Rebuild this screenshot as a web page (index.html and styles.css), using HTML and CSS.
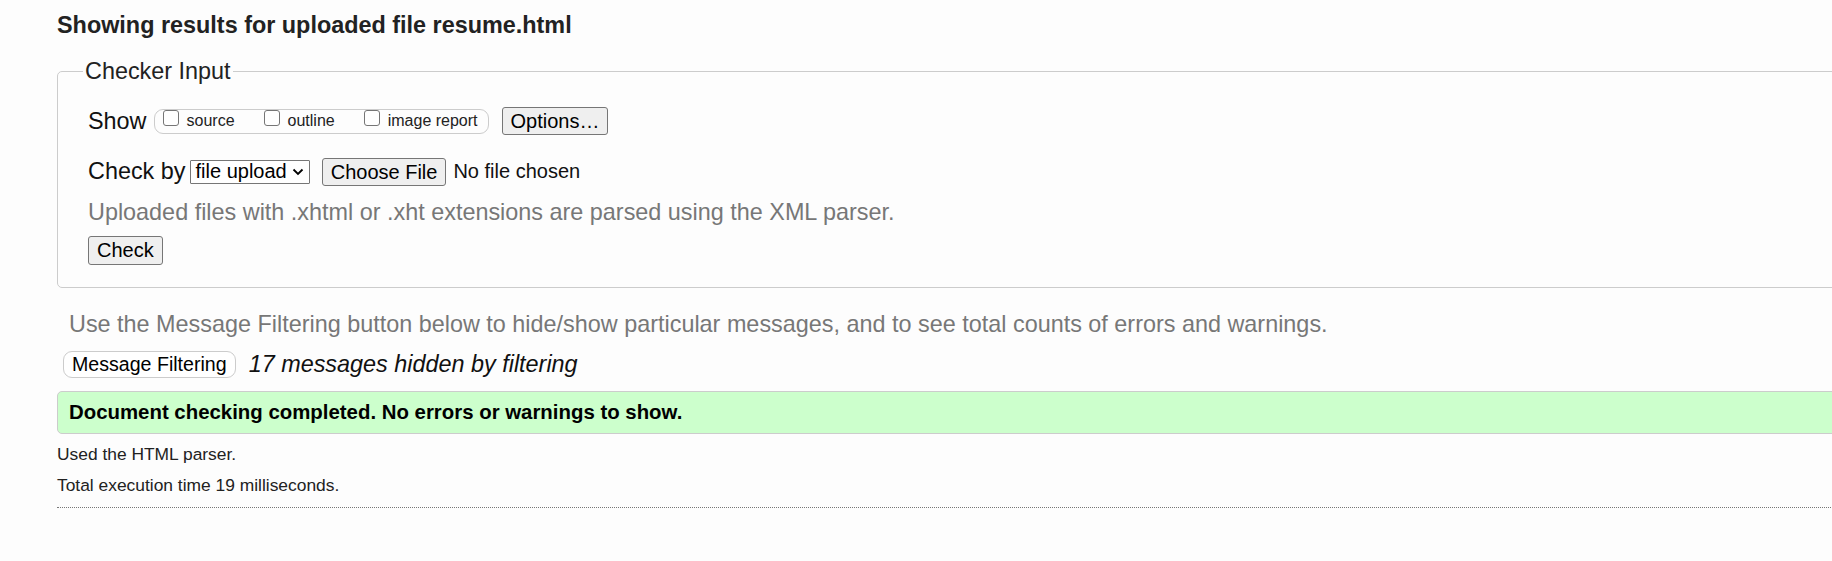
FILE: index.html
```html
<!DOCTYPE html>
<html lang="en">
<head>
<meta charset="utf-8">
<title>Nu Html Checker</title>
<link rel="stylesheet" href="styles.css">
</head>
<body>
<div class="page">
  <h2 class="heading">Showing results for uploaded file resume.html</h2>
  <form class="checker">
    <fieldset class="input-box">
      <legend class="legend">Checker Input</legend>
      <div class="row row-show">
        <span class="label">Show</span>
        <span class="opts">
          <label class="opt"><span class="cb"></span>source</label>
          <label class="opt"><span class="cb"></span>outline</label>
          <label class="opt"><span class="cb"></span>image report</label>
        </span>
        <span class="btn">Options…</span>
      </div>
      <div class="row row-by">
        <span class="label label-by">Check by</span>
        <span class="select">file upload
          <svg class="chev" width="12" height="8" viewBox="0 0 12 8"><path d="M1.5 1.5 L6 6 L10.5 1.5" fill="none" stroke="#000" stroke-width="1.8"/></svg>
        </span>
        <span class="btn btn-file">Choose File</span>
        <span class="nofile">No file chosen</span>
      </div>
      <p class="note">Uploaded files with .xhtml or .xht extensions are parsed using the XML parser.</p>
      <div class="row row-check"><span class="btn btn-check">Check</span></div>
    </fieldset>
  </form>
  <p class="hint">Use the Message Filtering button below to hide/show particular messages, and to see total counts of errors and warnings.</p>
  <div class="filter-row">
    <span class="pill">Message Filtering</span>
    <em class="hidden-count">17 messages hidden by filtering</em>
  </div>
  <div class="success">Document checking completed. No errors or warnings to show.</div>
  <p class="meta meta-first">Used the HTML parser.</p>
  <p class="meta">Total execution time 19 milliseconds.</p>
  <div class="rule"></div>
</div>
</body>
</html>
```
FILE: styles.css
```css
html, body {
  margin: 0;
  padding: 0;
  background: #fdfdfd;
  overflow: hidden;
}
body {
  font-family: "Liberation Sans", Arial, sans-serif;
  color: #111;
  font-size: 23.4px;
}
.page {
  padding-left: 57px;
  width: 1840px;
}
.heading {
  font-size: 23.4px;
  line-height: 26px;
  font-weight: bold;
  margin: 11.5px 0 20px 0;
  color: #222;
}
.checker { margin: 0; }
.input-box {
  margin: 0;
  border: 1px solid #ccc;
  border-radius: 5px;
  padding: 0 0 22px 30px;
}
.legend {
  font-size: 23.4px;
  line-height: 27px;
  padding: 0 2px;
  margin-left: -5px;
  color: #222;
}
.row {
  display: flex;
  align-items: center;
}
.row-show { margin-top: 22.5px; height: 28px; }
.row-by { margin-top: 23px; height: 27px; }
.row-check { margin-top: 10.5px; }
.label { margin-right: 7px; line-height: 27px; }
.label-by { margin-right: 4px; }
.opts {
  display: inline-flex;
  align-items: center;
  height: 23px;
  border: 1px solid #ccc;
  border-radius: 9px;
  padding: 0 10px 0 8px;
  margin-right: 13px;
  font-size: 16px;
  color: #222;
}
.opt {
  display: inline-flex;
  align-items: center;
  margin-right: 29px;
}
.opt:last-child { margin-right: 0; }
.cb {
  width: 14px;
  height: 14px;
  border: 1.5px solid #767676;
  border-radius: 3px;
  background: #fff;
  margin-right: 8px;
  position: relative;
  top: -3px;
}
.btn {
  display: inline-block;
  background: #efefef;
  border: 1px solid #767676;
  border-radius: 3px;
  padding: 1px 8px;
  font-size: 20px;
  line-height: 24px;
  color: #000;
}
.btn-check { line-height: 25px; }
.select {
  display: inline-flex;
  align-items: center;
  height: 22px;
  border: 1px solid #767676;
  border-radius: 1px;
  padding: 0 5px;
  font-size: 20px;
  margin-right: 12px;
  background: #fff;
  color: #000;
}
.chev { margin-left: 5px; }
.btn-file { margin-right: 7px; }
.nofile { font-size: 20px; }
.note {
  margin: 13.5px 0 0 0;
  line-height: 27px;
  color: #777;
}
.hint {
  margin: 23px 0 0 12px;
  line-height: 27px;
  color: #777;
}
.filter-row {
  display: flex;
  align-items: center;
  margin-top: 12.5px;
  margin-left: 6px;
}
.pill {
  display: inline-block;
  background: #fff;
  border: 1px solid #ccc;
  border-radius: 9px;
  padding: 1px 8px;
  line-height: 23px;
  font-size: 19.6px;
  color: #000;
}
.hidden-count {
  margin-left: 13px;
  font-size: 23.4px;
  line-height: 27px;
  color: #111;
}
.success {
  margin-top: 13px;
  height: 41px;
  line-height: 41px;
  background: #ccffcc;
  border: 1px solid #ccc;
  border-radius: 5px;
  padding-left: 11px;
  font-weight: bold;
  font-size: 20.4px;
  color: #000;
}
.meta {
  margin: 0;
  font-size: 17.4px;
  line-height: 31px;
  color: #222;
}
.meta-first { margin-top: 5px; }
.rule {
  margin-top: 6px;
  border-top: 1px dotted #777;
}
```
